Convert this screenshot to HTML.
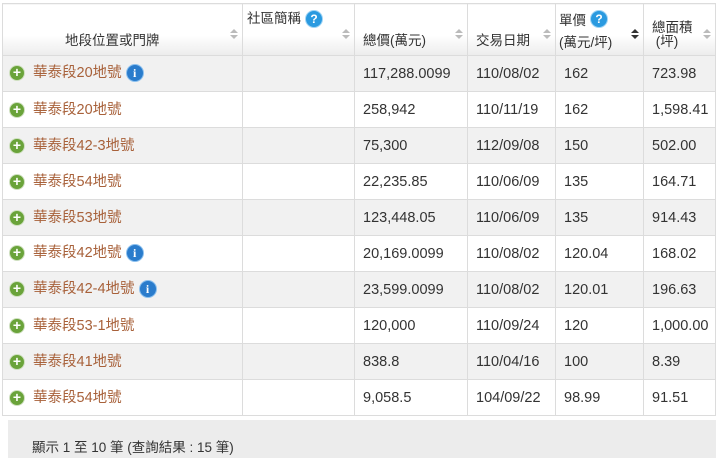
<!DOCTYPE html>
<html><head><meta charset="utf-8"><style>
body{margin:0;width:716px;height:458px;overflow:hidden;background:#fff;font-family:"Liberation Sans","Noto Sans CJK TC",sans-serif;}
table{position:absolute;left:2px;top:3px;border-collapse:collapse;width:714px;table-layout:fixed;}
td,th{border:1px solid #dcdcdc;font-size:14.5px;color:#333;padding:0 0 0 8px;height:35px;line-height:16px;text-align:left;font-weight:normal;position:relative;box-sizing:border-box;white-space:nowrap}
td{height:36px}
th{height:52px;padding:0;background:linear-gradient(#fff,#fff 60%,#ececec);font-size:13.5px;}
th div{position:absolute;left:8px;top:28px;line-height:15px}
tr.g td{background:#f1f1f1}
.s{position:absolute;right:8px;top:30px;width:0;height:0}
.s:before{content:"";position:absolute;left:-4px;top:-5px;border:4px solid transparent;border-bottom:4px solid #bbb;border-top:0}
.s:after{content:"";position:absolute;left:-4px;top:1px;border:4px solid transparent;border-top:4px solid #bbb;border-bottom:0}
.s.d:after{border-top-color:#333}.s.d:before{border-bottom-color:#333}
.p{display:inline-block;box-sizing:border-box;width:16px;height:16px;border-radius:50%;background:#6aa33a;border:1px solid #cfe0c0;color:#fff;font-size:14px;line-height:13px;text-align:center;font-weight:bold;vertical-align:top;margin-right:8px;margin-left:-2px}
a{color:#a8613a;text-decoration:none;vertical-align:top}
.i{display:inline-block;box-sizing:border-box;width:18px;height:18px;border-radius:50%;background:#2a7ccc;border:1px solid #8cc0ee;color:#fff;font-size:12px;line-height:16px;text-align:center;font-weight:bold;font-family:"Liberation Serif",serif;vertical-align:top;margin-top:-1px;margin-left:4px}
.q{display:inline-block;box-sizing:border-box;width:18px;height:18px;border-radius:50%;background:#2a9ae0;border:1px solid #9fd4f5;color:#fff;font-size:12px;line-height:16px;text-align:center;font-weight:bold;vertical-align:top;margin-left:4px}
.f{position:absolute;left:8px;top:420px;width:708px;height:38px;background:#ececec;font-size:13.5px;color:#333}
.f span{position:absolute;left:24px;top:16px}
</style></head><body>
<table>
<colgroup><col style="width:240px"><col style="width:112px"><col style="width:113px"><col style="width:88px"><col style="width:88px"><col></colgroup>
<tr><th><div style="left:62px;top:29px">地段位置或門牌</div><i class="s"></i></th>
<th><div style="left:4px;top:6px;line-height:18px">社區簡稱<span class="q">?</span></div><i class="s"></i></th>
<th><div style="top:29px">總價(萬元)</div><i class="s"></i></th>
<th><div style="top:29px">交易日期</div><i class="s"></i></th>
<th><div style="left:3px;top:6px;line-height:22px">單價<span class="q">?</span><br>(萬元/坪)</div><i class="s d"></i></th>
<th><div style="top:17px;line-height:14px">總面積<br>&nbsp;(坪)</div><i class="s"></i></th></tr>
<tr class="g"><td><span class="p">+</span><a>華泰段20地號</a><span class="i">i</span></td><td></td><td>117,288.0099</td><td>110/08/02</td><td>162</td><td>723.98</td></tr>
<tr><td><span class="p">+</span><a>華泰段20地號</a></td><td></td><td>258,942</td><td>110/11/19</td><td>162</td><td>1,598.41</td></tr>
<tr class="g"><td><span class="p">+</span><a>華泰段42-3地號</a></td><td></td><td>75,300</td><td>112/09/08</td><td>150</td><td>502.00</td></tr>
<tr><td><span class="p">+</span><a>華泰段54地號</a></td><td></td><td>22,235.85</td><td>110/06/09</td><td>135</td><td>164.71</td></tr>
<tr class="g"><td><span class="p">+</span><a>華泰段53地號</a></td><td></td><td>123,448.05</td><td>110/06/09</td><td>135</td><td>914.43</td></tr>
<tr><td><span class="p">+</span><a>華泰段42地號</a><span class="i">i</span></td><td></td><td>20,169.0099</td><td>110/08/02</td><td>120.04</td><td>168.02</td></tr>
<tr class="g"><td><span class="p">+</span><a>華泰段42-4地號</a><span class="i">i</span></td><td></td><td>23,599.0099</td><td>110/08/02</td><td>120.01</td><td>196.63</td></tr>
<tr><td><span class="p">+</span><a>華泰段53-1地號</a></td><td></td><td>120,000</td><td>110/09/24</td><td>120</td><td>1,000.00</td></tr>
<tr class="g"><td><span class="p">+</span><a>華泰段41地號</a></td><td></td><td>838.8</td><td>110/04/16</td><td>100</td><td>8.39</td></tr>
<tr><td><span class="p">+</span><a>華泰段54地號</a></td><td></td><td>9,058.5</td><td>104/09/22</td><td>98.99</td><td>91.51</td></tr>
</table>
<div class="f"><span>顯示 1 至 10 筆 (查詢結果 : 15 筆)</span></div>
</body></html>
